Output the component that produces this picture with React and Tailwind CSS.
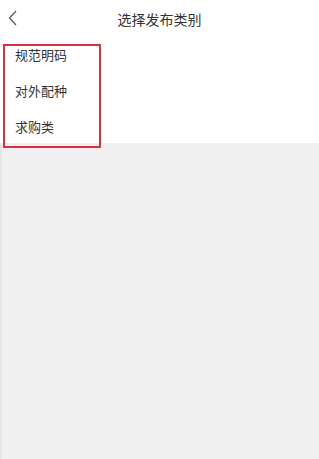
import React from 'react';

const items = ['规范明码', '对外配种', '求购类'];

export default function App() {
  return (
    <div
      className="relative w-[319px] h-[459px] flex flex-col bg-white text-[#333]"
      style={{ fontFamily: '"Noto Sans CJK SC", "Noto Sans", sans-serif' }}
    >
      {/* Header */}
      <div className="h-[37px] flex items-center relative shrink-0">
        <svg className="absolute left-[8px] top-[10px] w-[9px] h-[16px]" viewBox="0 0 9 16" fill="none" stroke="#555" strokeWidth="1.2">
          <path d="M8 1L1.5 8L8 15" />
        </svg>
        <h1 className="flex-1 text-center text-[14px] leading-none">选择发布类别</h1>
      </div>

      {/* Category list */}
      <div className="flex flex-col">
        {items.map((t) => (
          <div key={t} className="h-9 flex items-center pl-[15px] text-[13px]">{t}</div>
        ))}
      </div>

      {/* Empty area */}
      <div className="flex-1 bg-[#f0f0f0] border-l-2 border-[#e6e6e6] mt-[-2px]" />

      {/* Annotation box */}
      <div className="absolute left-[3px] top-[44px] w-[98px] h-[104px] border-2 border-[#d8303e]" />
    </div>
  );
}
